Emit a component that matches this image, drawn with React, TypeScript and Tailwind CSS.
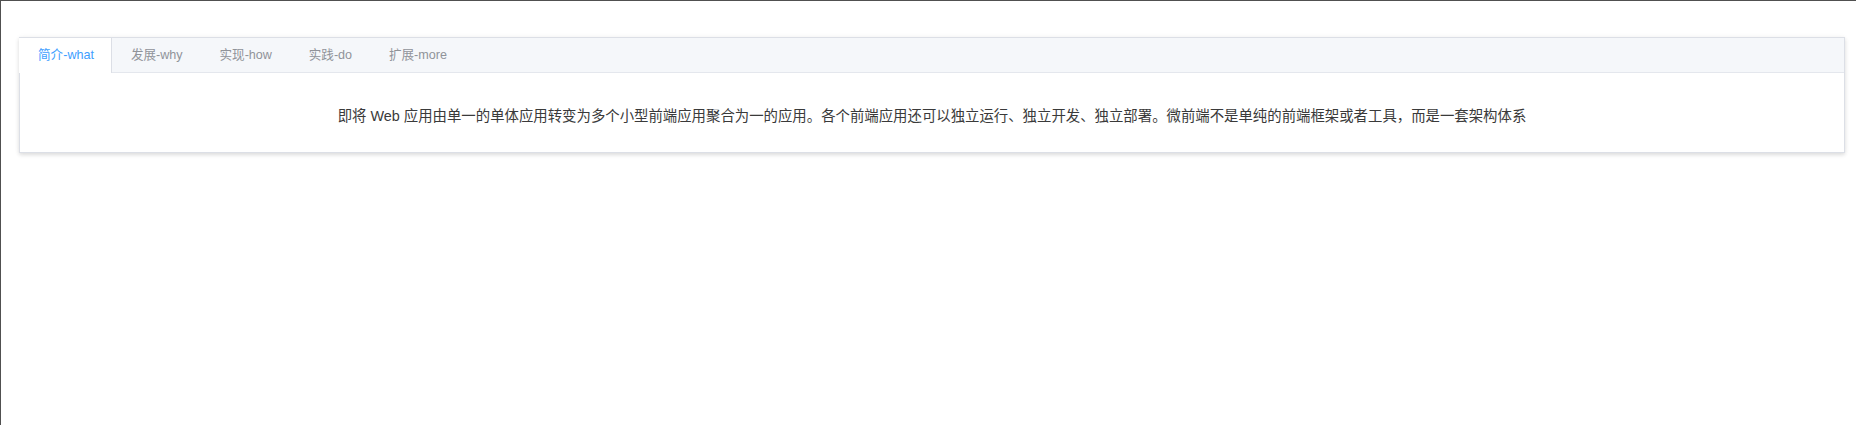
import React from "react";

const tabs = ["简介-what", "发展-why", "实现-how", "实践-do", "扩展-more"];

export default function App() {
  const active = 0;
  return (
    <div className="h-[425px] w-[1856px] border-t border-l border-[#505050] bg-white pl-[18px] pt-[36px] pr-[11px] font-['Liberation_Sans','Noto_Sans_CJK_SC',sans-serif]">
      <div className="border border-[#DCDFE6] bg-white shadow-[0_2px_4px_0_rgba(0,0,0,0.12),0_0_6px_0_rgba(0,0,0,0.04)]">
        <div className="flex h-[35px] border-b border-[#E4E7ED] bg-[#F5F7FA]">
          {tabs.map((t, i) => (
            <div
              key={t}
              className={
                i === active
                  ? "-mb-px -ml-px h-[35px] border-x border-[#DCDFE6] border-l-transparent bg-white pl-[18px] pr-[17.5px] text-[12.6px] leading-[35px] text-[#409EFF]"
                  : "-mb-px h-[35px] border-x border-transparent px-[17.4px] text-[12.6px] leading-[35px] text-[#909399]"
              }
            >
              {t}
            </div>
          ))}
        </div>
        <div className="flex h-[79px] items-center justify-center pt-[7px] text-center text-[14.4px] leading-[20px] text-[#3a3a3a]">
          即将 Web 应用由单一的单体应用转变为多个小型前端应用聚合为一的应用。各个前端应用还可以独立运行、独立开发、独立部署。微前端不是单纯的前端框架或者工具，而是一套架构体系
        </div>
      </div>
    </div>
  );
}
